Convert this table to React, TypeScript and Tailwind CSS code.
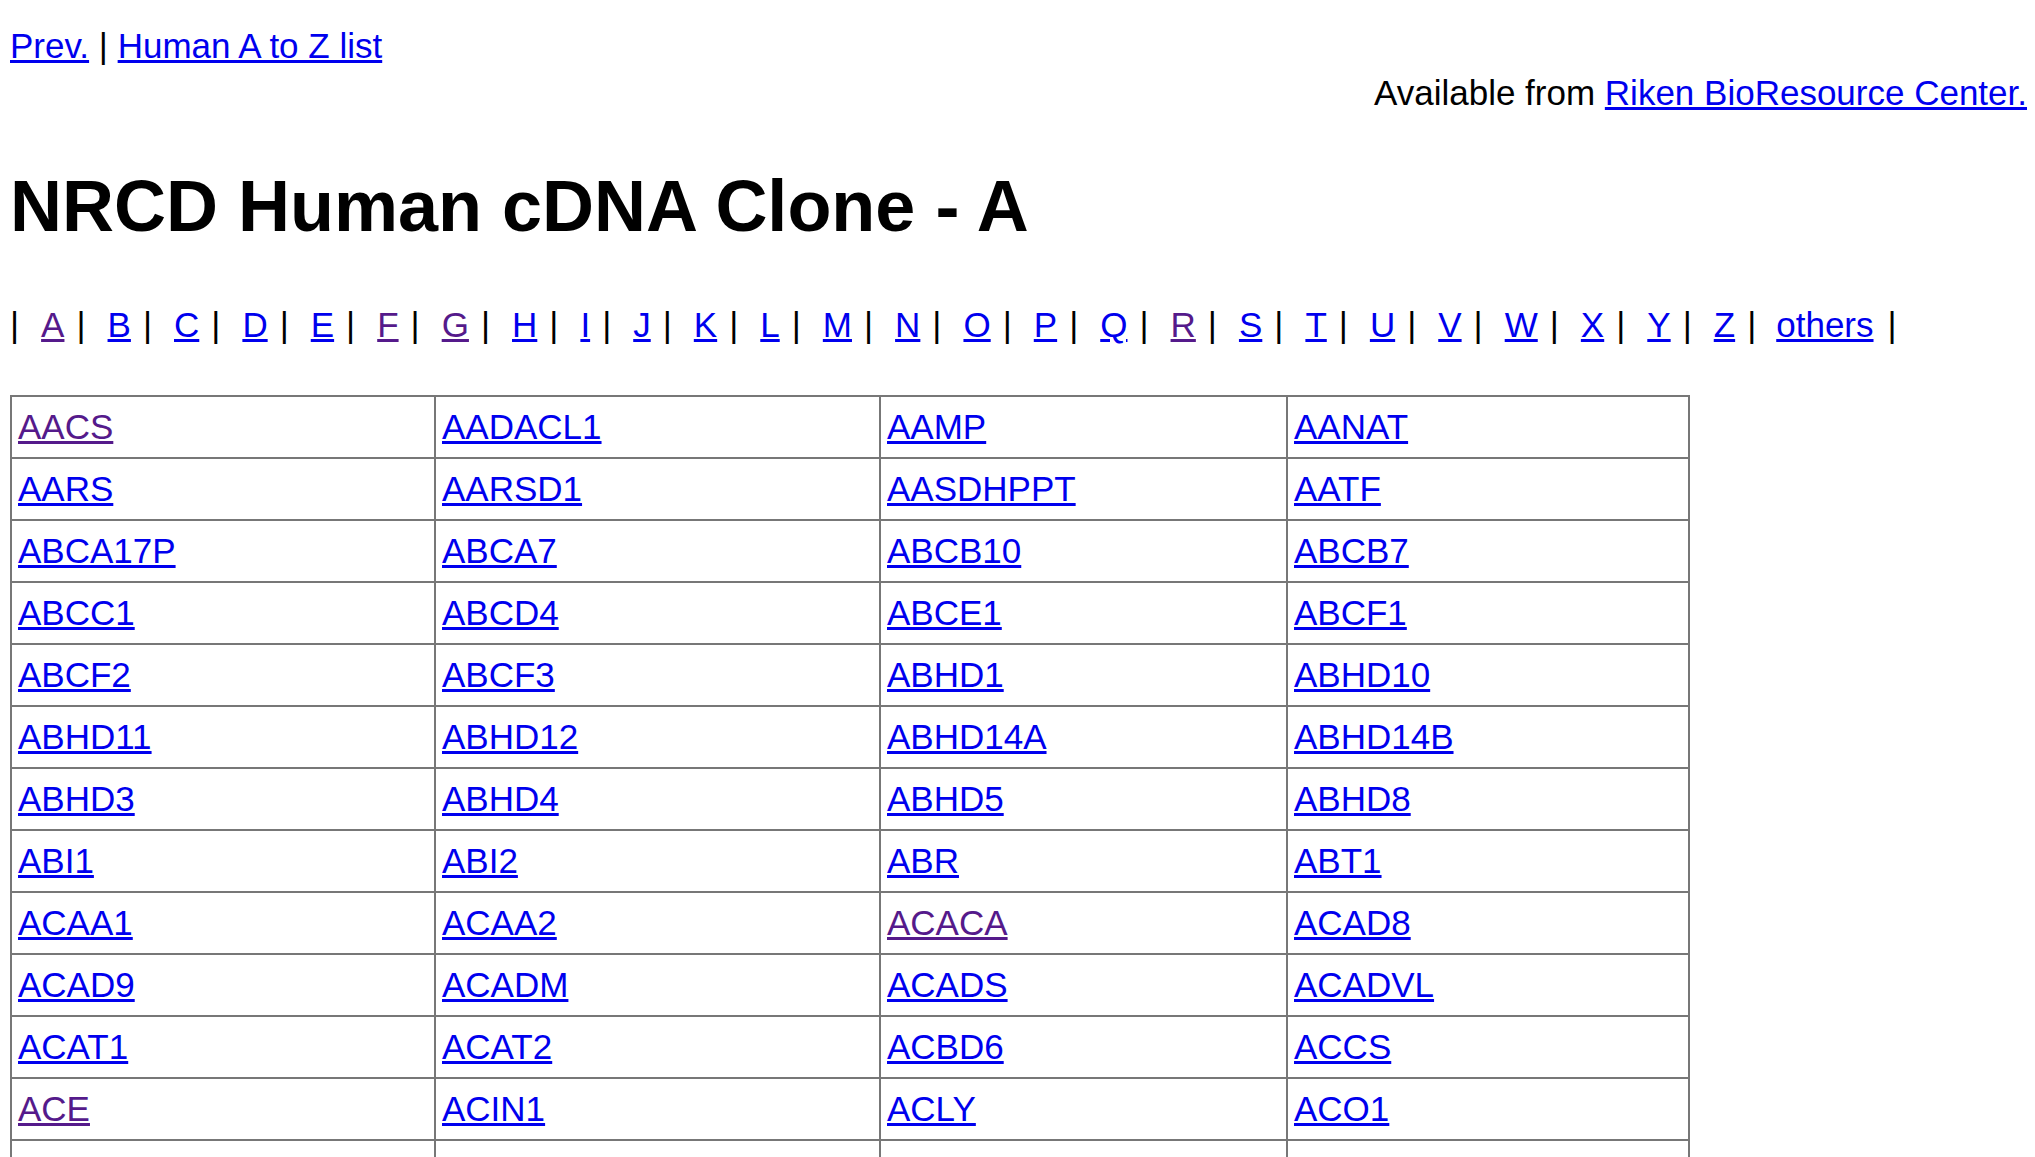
import React from "react";

const letters = "ABCDEFGHIJKLMNOPQRSTUVWXYZ".split("");
const visitedLetters = ["A", "F", "G", "R"];

const rows: string[][] = [
  ["AACS", "AADACL1", "AAMP", "AANAT"],
  ["AARS", "AARSD1", "AASDHPPT", "AATF"],
  ["ABCA17P", "ABCA7", "ABCB10", "ABCB7"],
  ["ABCC1", "ABCD4", "ABCE1", "ABCF1"],
  ["ABCF2", "ABCF3", "ABHD1", "ABHD10"],
  ["ABHD11", "ABHD12", "ABHD14A", "ABHD14B"],
  ["ABHD3", "ABHD4", "ABHD5", "ABHD8"],
  ["ABI1", "ABI2", "ABR", "ABT1"],
  ["ACAA1", "ACAA2", "ACACA", "ACAD8"],
  ["ACAD9", "ACADM", "ACADS", "ACADVL"],
  ["ACAT1", "ACAT2", "ACBD6", "ACCS"],
  ["ACE", "ACIN1", "ACLY", "ACO1"],
];

const visitedGenes = ["AACS", "ACACA", "ACE"];

const colWidths = ["w-[424px]", "w-[445px]", "w-[407px]", "w-[402px]"];

const cellClass = "border-2 border-[#777777] px-[6px] pt-[6px] pb-[7px] text-left align-top";

function Link({ children, visited }: { children: React.ReactNode; visited?: boolean }) {
  return (
    <a
      href="#"
      className={visited ? "text-[#551a8b] underline" : "text-[#0000ee] underline"}
    >
      {children}
    </a>
  );
}

export default function App() {
  return (
    <div className="min-h-screen bg-white pl-[10px] pr-[8px] pt-[22px] font-['Liberation_Sans',Arial,sans-serif] text-[35px] leading-[47px] text-black">
      <div>
        <Link>Prev.</Link> | <Link>Human A to Z list</Link>
      </div>
      <div className="text-right">
        Available from <Link>Riken BioResource Center.</Link>
      </div>

      <h1 className="mt-[49px] text-[72px] font-bold leading-[82px]">
        NRCD Human cDNA Clone - A
      </h1>

      <div className="mt-[54px] flex items-baseline whitespace-nowrap">
        {letters.map((l) => (
          <React.Fragment key={l}>
            <span>|</span>
            <span className="ml-[22px] mr-[12px]">
              <Link visited={visitedLetters.includes(l)}>{l}</Link>
            </span>
          </React.Fragment>
        ))}
        <span>|</span>
        <span className="ml-[20px] mr-[14px]">
          <Link>others</Link>
        </span>
        <span>|</span>
      </div>

      <table className="mt-[47px] border-collapse">
        <tbody>
          {rows.map((row, i) => (
            <tr key={i}>
              {row.map((gene, j) => (
                <td key={gene} className={`${colWidths[j]} ${cellClass}`}>
                  <Link visited={visitedGenes.includes(gene)}>{gene}</Link>
                </td>
              ))}
            </tr>
          ))}
          {/* next row continues below the fold */}
          <tr>
            {colWidths.map((w) => (
              <td key={w} className={`${w} ${cellClass}`}>
                {"\u00a0"}
              </td>
            ))}
          </tr>
        </tbody>
      </table>
    </div>
  );
}
